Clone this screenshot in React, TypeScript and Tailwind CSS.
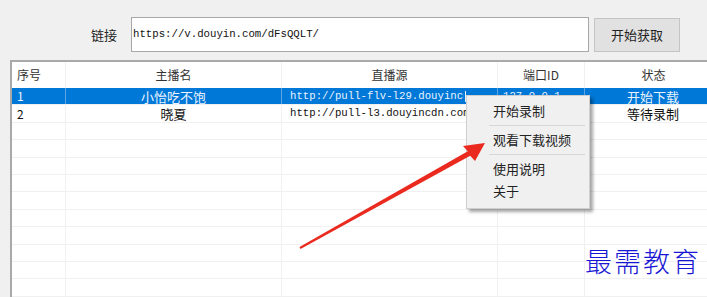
const cjk = "font-['Noto_Sans_CJK_SC',sans-serif]";
const mono = "font-['Liberation_Mono','Noto_Sans_CJK_SC',monospace]";

type Row = { id: string; name: string; url: string; port: string; status: string; clip?: boolean };

const rows: Row[] = [
  {
    id: "1",
    name: "小怡吃不饱",
    url: "http://pull-flv-l29.douyincdn.com/stage/stream-1089.flv",
    port: "127.0.0.1",
    status: "开始下载",
    clip: true,
  },
  {
    id: "2",
    name: "晓夏",
    url: "http://pull-l3.douyincdn.com/stage/stream-2210.flv",
    port: "127.0.0.1",
    status: "等待录制",
  },
];

const emptyRows = Array.from({ length: 10 });

export default function App() {
  return (
    <div className={`relative h-[297px] w-[707px] overflow-hidden bg-[#f0f0f0] ${cjk}`}>
      {/* link bar */}
      <div className="flex h-[60px] items-start pl-[91px] pt-[17px]">
        <div className="flex h-[35px] items-center">
          <span className="w-[40px] text-[13px] text-[#222]">链接</span>
          <div className="flex h-[35px] w-[458px] items-center border border-[#a8a8a8] bg-white pl-[1px]">
            <span className={`text-[10.7px] text-[#111] ${mono}`}>https://v.douyin.com/dFsQQLT/</span>
          </div>
          <button
            type="button"
            className="ml-[5px] flex h-[34px] w-[86px] items-center justify-center border border-[#c4c4c4] bg-[#e1e1e1] text-[13px] text-[#222]"
          >
            开始获取
          </button>
        </div>
      </div>

      {/* table */}
      <div className="ml-[10px] border-l-2 border-t-2 border-[#a9a9a9] bg-white">
        <div className="grid h-[26px] grid-cols-[54px_216px_216px_87px_137px] text-[12px] text-[#333]">
          <div className="flex items-center border-r border-[#f0f0f0] pl-[5px]">序号</div>
          <div className="flex items-center justify-center border-r border-[#f0f0f0]">主播名</div>
          <div className="flex items-center justify-center border-r border-[#f0f0f0]">直播源</div>
          <div className="flex items-center justify-center border-r border-[#f0f0f0]">端口ID</div>
          <div className="flex items-center justify-center">状态</div>
        </div>

        {rows.map((r, i) => {
          const sel = i === 0;
          const cell = sel
            ? "border-r border-[#5aa6e6] bg-[#0078d7] text-[#eaf3ff]"
            : "border-r border-[#f0f0f0] text-[#111]";
          return (
            <div
              key={r.id}
              className="grid h-[17.4px] grid-cols-[54px_216px_216px_87px_137px] border-b border-[#f0f0f0] text-[13px] leading-none"
            >
              <div className={`flex items-center pl-[5px] text-[12px] ${cell}`}>{r.id}</div>
              <div className={`flex items-center justify-center ${cell}`}>{r.name}</div>
              <div className={`flex items-center overflow-hidden whitespace-nowrap pl-[8px] ${cell}`}>
                {/* row being edited: text stops at the caret */}
                <span className={`overflow-hidden text-[10.7px] ${mono} ${r.clip ? "max-w-[174px]" : ""}`}>{r.url}</span>
                {r.clip && <span className="ml-px h-[11px] w-px bg-[#eaf3ff]" />}
              </div>
              <div className={`flex items-center overflow-hidden whitespace-nowrap pl-[5px] ${cell}`}>
                <span className={`text-[10.7px] ${mono}`}>{r.port}</span>
              </div>
              <div className={`flex items-center justify-center ${cell}`}>{r.status}</div>
            </div>
          );
        })}

        {emptyRows.map((_, i) => (
          <div
            key={i}
            className="grid h-[17.4px] grid-cols-[54px_216px_216px_87px_137px] border-b border-[#f0f0f0]"
          >
            <div className="border-r border-[#f0f0f0]" />
            <div className="border-r border-[#f0f0f0]" />
            <div className="border-r border-[#f0f0f0]" />
            <div className="border-r border-[#f0f0f0]" />
            <div />
          </div>
        ))}
      </div>

      {/* context menu */}
      <div className="absolute left-[466px] top-[95px] w-[124px] border border-[#cfcfcf] bg-[#f0f0f0] pb-[6px] pt-[4px] text-[13px] text-[#222] shadow-[3px_3px_3px_rgba(0,0,0,0.35)]">
        <div className="flex h-[22px] items-center pl-[26px]">开始录制</div>
        <div className="flex h-[7px] items-center pl-[22px] pr-[4px]">
          <div className="h-px w-full bg-[#d7d7d7]" />
        </div>
        <div className="flex h-[22px] items-center pl-[26px]">观看下载视频</div>
        <div className="flex h-[7px] items-center pl-[22px] pr-[4px]">
          <div className="h-px w-full bg-[#d7d7d7]" />
        </div>
        <div className="flex h-[22px] items-center pl-[26px]">使用说明</div>
        <div className="flex h-[22px] items-center pl-[26px]">关于</div>
      </div>

      {/* red arrow */}
      <svg className="pointer-events-none absolute left-0 top-0" width="707" height="297" viewBox="0 0 707 297">
        <polygon
          points="299.5,247.1 467.8,151.3 463,146 485,143 475,161 470.2,155.7 300.5,248.9"
          fill="#ea2a1f"
        />
      </svg>

      {/* watermark */}
      <div className="absolute left-[585px] top-[247px] text-[27px] leading-none tracking-[2px] text-[#1818d4] font-['Noto_Sans_CJK_SC',serif] font-light">
        最需教育
      </div>
    </div>
  );
}
